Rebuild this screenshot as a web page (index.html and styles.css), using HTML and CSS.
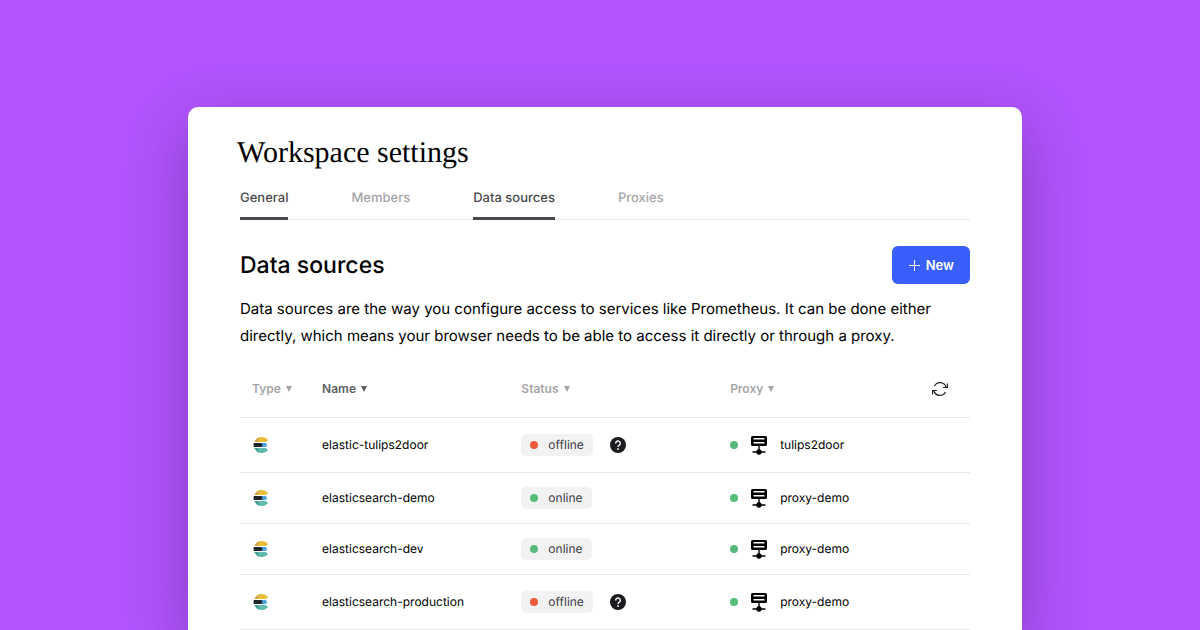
FILE: index.html
```html
<!DOCTYPE html>
<html lang="en">
<head>
<meta charset="utf-8">
<meta name="viewport" content="width=device-width, initial-scale=1">
<title>Workspace settings</title>
<link rel="stylesheet" href="styles.css">
</head>
<body>
<svg class="sprite" aria-hidden="true">
  <symbol id="elastic" viewBox="0 0 16 18">
    <path fill="#e9be3d" d="M1.500 6C2.700 3 5.400 1 8.800 1c2.700 0 4.800 1.100 6.200 2.900C14.300 5.300 13 6 11.500 6z"/>
    <path fill="#cfa247" d="M1.500 6C2.400 3.700 4.300 2 6.500 1.300C5.500 2.700 5 4.300 4.800 6z"/>
    <path fill="#46a5df" d="M8 7H12a2 2 0 0 1 0 4H8z"/>
    <path fill="#20242b" d="M.8 7H7.500a2 2 0 0 1 0 4H.8a9 9 0 0 1 0-4z"/>
    <path fill="#60b9ad" d="M1.500 12c1.200 3 3.900 5 7.300 5c2.700 0 4.800-1.100 6.200-2.900c-.7-1.400-2-2.100-3.500-2.100z"/>
    <path fill="#439a8e" d="M1.500 12c.9 2.300 2.800 4 5 4.700c-1-1.400-1.500-3-1.700-4.700z"/>
  </symbol>
  <symbol id="server" viewBox="0 0 18 20">
    <path fill-rule="evenodd" d="M2.500 1h13A1.500 1.500 0 0 1 17 2.500v7a1.500 1.500 0 0 1-1.500 1.500h-13A1.500 1.500 0 0 1 1 9.500v-7A1.500 1.500 0 0 1 2.500 1zM3.500 3v1.500h11V3zM3.500 7v1.500h11V7z"/>
    <path d="M8.300 11h1.400v4H8.300zM2.500 16.300h13v1.400h-13z"/>
    <circle cx="9" cy="17" r="2.700"/>
  </symbol>
  <symbol id="help" viewBox="0 0 16 16">
    <circle cx="8" cy="8" r="8" fill="#1b1c20"/>
    <path d="M5.700 6.500a2.300 2.300 0 1 1 3.700 1.600C8.500 8.700 8 8.900 8 9.900" fill="none" stroke="#fff" stroke-width="1.400"/>
    <circle cx="8" cy="12" r=".9" fill="#fff"/>
  </symbol>
</svg>
<main class="card">
  <h1 class="page-title">Workspace settings</h1>
  <nav class="tabs">
    <a class="tab tab-active" href="#general">General</a>
    <a class="tab" href="#members">Members</a>
    <a class="tab tab-active" href="#data-sources">Data sources</a>
    <a class="tab" href="#proxies">Proxies</a>
  </nav>
  <header class="section-head">
    <h2 class="section-title">Data sources</h2>
    <button class="new-button" type="button">
      <svg class="plus" viewBox="0 0 11 11" aria-hidden="true"><path d="M5.500 0v11M0 5.500h11"/></svg>New
    </button>
  </header>
  <p class="intro">Data sources are the way you configure access to services like Prometheus. It can be done either directly, which means your browser needs to be able to access it directly or through a proxy.</p>
  <table class="sources">
    <colgroup>
      <col class="col-type"><col class="col-name"><col class="col-status"><col class="col-proxy"><col>
    </colgroup>
    <thead>
      <tr>
        <th scope="col"><button class="sort" type="button">Type<span class="caret"></span></button></th>
        <th scope="col"><button class="sort sort-active" type="button">Name<span class="caret"></span></button></th>
        <th scope="col"><button class="sort" type="button">Status<span class="caret"></span></button></th>
        <th scope="col"><button class="sort" type="button">Proxy<span class="caret"></span></button></th>
        <th scope="col"><button class="refresh" type="button" aria-label="Refresh">
          <svg class="refresh-icon" viewBox="0 0 16 16" aria-hidden="true"><path d="M2.500 5A6.200 6.200 0 0 1 14 6M15.400 2.500v4h-4.300M13.500 11A6.200 6.200 0 0 1 2 10M.6 13.500v-4h4.300"/></svg>
        </button></th>
      </tr>
    </thead>
    <tbody>
      <tr>
        <td><svg class="type-icon" role="img" aria-label="Elasticsearch"><use href="#elastic"/></svg></td>
        <td>elastic-tulips2door</td>
        <td><div class="status"><span class="pill"><span class="dot dot-offline"></span>offline</span><button class="help" type="button" aria-label="Help"><svg class="help-icon"><use href="#help"/></svg></button></div></td>
        <td colspan="2"><div class="proxy"><span class="dot"></span><svg class="server-icon" aria-hidden="true"><use href="#server"/></svg>tulips2door</div></td>
      </tr>
      <tr>
        <td><svg class="type-icon" role="img" aria-label="Elasticsearch"><use href="#elastic"/></svg></td>
        <td>elasticsearch-demo</td>
        <td><div class="status"><span class="pill"><span class="dot"></span>online</span></div></td>
        <td colspan="2"><div class="proxy"><span class="dot"></span><svg class="server-icon" aria-hidden="true"><use href="#server"/></svg>proxy-demo</div></td>
      </tr>
      <tr>
        <td><svg class="type-icon" role="img" aria-label="Elasticsearch"><use href="#elastic"/></svg></td>
        <td>elasticsearch-dev</td>
        <td><div class="status"><span class="pill"><span class="dot"></span>online</span></div></td>
        <td colspan="2"><div class="proxy"><span class="dot"></span><svg class="server-icon" aria-hidden="true"><use href="#server"/></svg>proxy-demo</div></td>
      </tr>
      <tr>
        <td><svg class="type-icon" role="img" aria-label="Elasticsearch"><use href="#elastic"/></svg></td>
        <td>elasticsearch-production</td>
        <td><div class="status"><span class="pill"><span class="dot dot-offline"></span>offline</span><button class="help" type="button" aria-label="Help"><svg class="help-icon"><use href="#help"/></svg></button></div></td>
        <td colspan="2"><div class="proxy"><span class="dot"></span><svg class="server-icon" aria-hidden="true"><use href="#server"/></svg>proxy-demo</div></td>
      </tr>
    </tbody>
  </table>
</main>
</body>
</html>
```
FILE: styles.css
```css
* { box-sizing: border-box; }

body {
  margin: 0;
  min-height: 100vh;
  display: flex;
  flex-direction: column;
  padding: 107px 178px 0 188px;
  background: #b254ff;
  color: #000;
  font-family: Inter, "Liberation Sans", sans-serif;
  text-rendering: geometricPrecision;
}

button {
  border: 0;
  padding: 0;
  background: none;
  color: inherit;
  font: inherit;
  cursor: pointer;
}

.sprite { display: none; }

.card {
  flex: 1;
  padding: 28px 52px 0;
  background: #fff;
  border-radius: 10px 10px 0 0;
  box-shadow: 0 20px 64px rgba(60, 30, 90, 0.4);
}

.page-title {
  margin: 0 0 0 -3px;
  font: 400 30px/36px "Liberation Serif", serif;
}

.tabs {
  display: flex;
  gap: 63px;
  margin-top: 13px;
  border-bottom: 1px solid #e9e9eb;
}

.tab {
  padding: 4px 0 9px;
  margin-bottom: -1px;
  border-bottom: 3px solid transparent;
  color: #a5a5a7;
  font-size: 13px;
  font-weight: 500;
  line-height: 20px;
  text-decoration: none;
}

.tab-active {
  border-color: #49494f;
  color: #49494f;
}

.section-head {
  display: flex;
  align-items: center;
  justify-content: space-between;
  margin-top: 26px;
}

.section-title {
  margin: 0;
  font-size: 23px;
  font-weight: 500;
  line-height: 32px;
}

.new-button {
  display: flex;
  align-items: center;
  gap: 6px;
  padding: 9px 16px 9px 17px;
  border-radius: 6px;
  background: #385ff9;
  color: #fff;
  font-size: 13px;
  font-weight: 600;
  line-height: 20px;
}

.plus {
  width: 11px;
  height: 11px;
  fill: none;
  stroke: #fff;
}

.intro {
  margin: 11px 0 0;
  font-size: 15px;
  line-height: 27px;
}

.sources {
  width: 100%;
  margin-top: 12px;
  border-collapse: collapse;
  table-layout: fixed;
  font-size: 12px;
  line-height: 16px;
}

.col-type { width: 9.6%; }
.col-name { width: 27.3%; }
.col-status { width: 28.6%; }
.col-proxy { width: 27.6%; }

.sources th,
.sources td {
  padding: 14px 0 14px 12px;
  border-bottom: 1px solid #e8e8e9;
  text-align: left;
  vertical-align: middle;
}

.sources th { padding: 18px 0 18px 12px; }

.sources svg { display: block; }

.sort {
  display: flex;
  align-items: center;
  gap: 5px;
  color: #a5a5a7;
  font-size: 12px;
  font-weight: 600;
  line-height: 20px;
}

.sort-active { color: #5d5e63; }

.caret {
  border: solid transparent;
  border-width: 6px 3px 0;
  border-top-color: currentColor;
}

.refresh { display: block; }

.refresh-icon {
  width: 16px;
  height: 16px;
  fill: none;
  stroke: #222;
  stroke-width: 1.2;
}

.type-icon {
  width: 18px;
  height: 18px;
}

.status,
.proxy {
  display: flex;
  align-items: center;
}

.status { gap: 16px; }

.pill {
  display: flex;
  align-items: center;
  gap: 10px;
  padding: 3px 9px;
  border-radius: 5px;
  background: #f2f2f3;
  color: #3c3d43;
}

.dot {
  width: 8px;
  height: 8px;
  border-radius: 50%;
  background: #58ba7b;
}

.dot-offline { background: #ee5a3e; }

.help { padding: 5px 1px; }

.help-icon {
  width: 16px;
  height: 16px;
}

.server-icon {
  width: 18px;
  height: 20px;
  margin: 0 12px;
}
```
